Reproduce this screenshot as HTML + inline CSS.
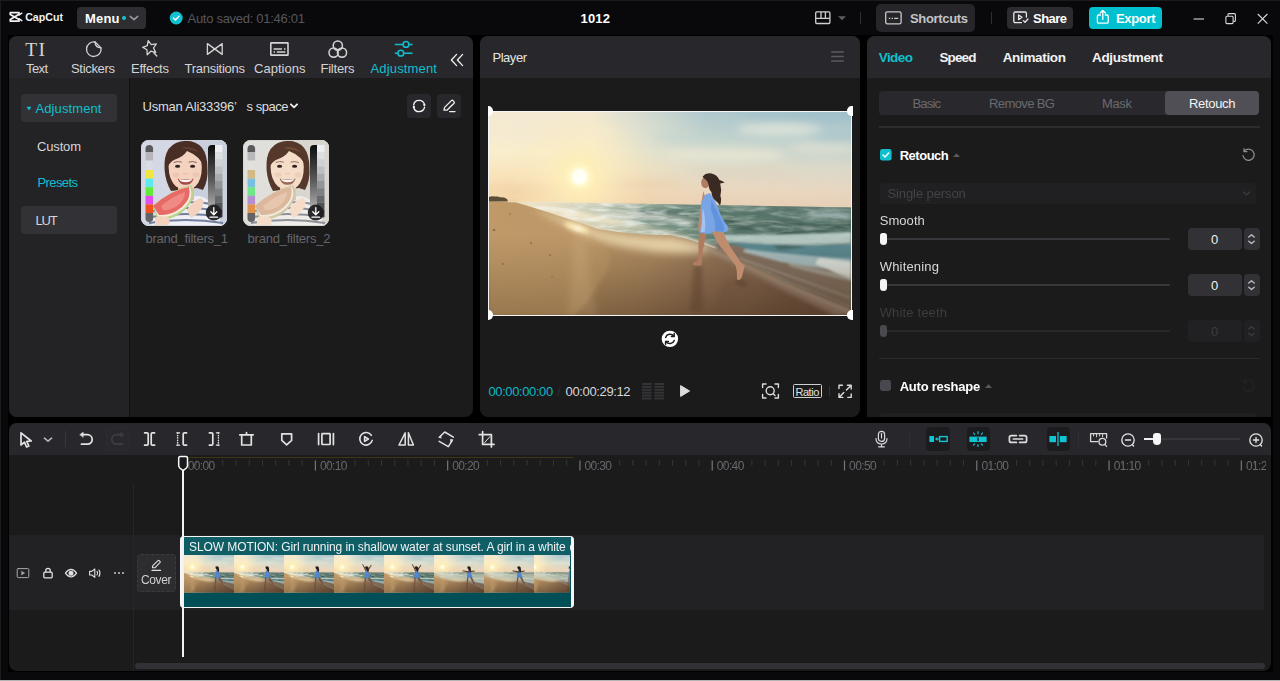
<!DOCTYPE html>
<html lang="en"><head><meta charset="utf-8"><title>CapCut</title>
<style>
*{box-sizing:border-box;margin:0;padding:0}
html,body{width:1280px;height:681px;overflow:hidden;background:#09090b}
body{position:relative;font-family:"Liberation Sans",sans-serif;font-size:13px;color:#fff}
.a{position:absolute}
.t{position:absolute;white-space:nowrap;display:block}
svg{position:absolute;overflow:visible}
.panel{position:absolute;background:#1b1b1c;border-radius:8px;overflow:hidden}
.hd{position:absolute;left:0;top:0;right:0;height:42px;background:#28282c}
.ic{fill:none;stroke:#d6d6d6;stroke-width:1.4;stroke-linecap:round;stroke-linejoin:round}

</style></head>
<body>

<svg width="0" height="0" style="left:0;top:0">
<defs>
<linearGradient id="skyL" x1="0" y1="0" x2="0" y2="1">
 <stop offset="0" stop-color="#f3ead4"/><stop offset="0.4" stop-color="#f9eecd"/><stop offset="0.72" stop-color="#f8dfb4"/><stop offset="1" stop-color="#f4d0a2"/>
</linearGradient>
<linearGradient id="skyR" x1="0" y1="0" x2="0" y2="1">
 <stop offset="0" stop-color="#a3c2cc"/><stop offset="0.3" stop-color="#bdd0cd"/><stop offset="0.55" stop-color="#d9d8c9"/><stop offset="0.8" stop-color="#e8d6c0"/><stop offset="1" stop-color="#e6ccb4"/>
</linearGradient>
<linearGradient id="skyMask" x1="0" y1="0" x2="1" y2="0">
 <stop offset="0.28" stop-color="#fff" stop-opacity="0"/><stop offset="0.6" stop-color="#fff" stop-opacity="0.85"/><stop offset="1" stop-color="#fff" stop-opacity="1"/>
</linearGradient>
<mask id="mR"><rect width="362" height="100" fill="url(#skyMask)"/></mask>
<radialGradient id="sunG" cx="90.5" cy="65" r="70" gradientUnits="userSpaceOnUse">
 <stop offset="0" stop-color="#fffef2"/><stop offset="0.1" stop-color="#fff7c6"/><stop offset="0.24" stop-color="#fdeeb8" stop-opacity="0.9"/><stop offset="0.55" stop-color="#fcecc0" stop-opacity="0.45"/><stop offset="1" stop-color="#fbe8b8" stop-opacity="0"/>
</radialGradient>
<linearGradient id="sandG" x1="0" y1="0" x2="1" y2="0.12">
 <stop offset="0" stop-color="#c09a68"/><stop offset="0.3" stop-color="#ba9566"/><stop offset="0.5" stop-color="#ac8a62"/><stop offset="0.72" stop-color="#8e6f55"/><stop offset="1" stop-color="#705543"/>
</linearGradient>
<linearGradient id="sandD" x1="0" y1="0" x2="0" y2="1">
 <stop offset="0" stop-color="#3a2410" stop-opacity="0"/><stop offset="0.3" stop-color="#3a2410" stop-opacity="0"/><stop offset="0.65" stop-color="#3a2410" stop-opacity="0.2"/><stop offset="1" stop-color="#3a2410" stop-opacity="0.42"/>
</linearGradient>
<linearGradient id="seaG" x1="0" y1="0" x2="1" y2="0">
 <stop offset="0.06" stop-color="#efe3c6"/><stop offset="0.22" stop-color="#e2dcc4"/><stop offset="0.32" stop-color="#c9ccb8"/><stop offset="0.44" stop-color="#9cae9c"/><stop offset="0.6" stop-color="#627e70"/><stop offset="1" stop-color="#49655b"/>
</linearGradient>
<filter id="b05" x="-20%" y="-20%" width="140%" height="140%"><feGaussianBlur stdDeviation="0.5"/></filter>
<filter id="b1" x="-20%" y="-20%" width="140%" height="140%"><feGaussianBlur stdDeviation="1"/></filter>
<filter id="b2" x="-20%" y="-20%" width="140%" height="140%"><feGaussianBlur stdDeviation="2"/></filter>
<filter id="b4" x="-30%" y="-30%" width="160%" height="160%"><feGaussianBlur stdDeviation="4.5"/></filter>
<filter id="b8" x="-40%" y="-40%" width="180%" height="180%"><feGaussianBlur stdDeviation="9"/></filter>
<filter id="foam" x="0" y="0" width="100%" height="100%">
 <feTurbulence type="fractalNoise" baseFrequency="0.045 0.22" numOctaves="3" seed="7" result="n"/>
 <feColorMatrix in="n" type="matrix" values="0 0 0 0 0.9  0 0 0 0 0.93  0 0 0 0 0.9  2.6 1.4 0 0 -1.75"/>
</filter>
<filter id="dark" x="0" y="0" width="100%" height="100%">
 <feTurbulence type="fractalNoise" baseFrequency="0.03 0.16" numOctaves="3" seed="21" result="n"/>
 <feColorMatrix in="n" type="matrix" values="0 0 0 0 0.16  0 0 0 0 0.25  0 0 0 0 0.21  0 2.8 1.2 0 -1.6"/>
</filter>
<filter id="grain" x="0" y="0" width="100%" height="100%">
 <feTurbulence type="fractalNoise" baseFrequency="0.6" numOctaves="2" seed="3" result="n"/>
 <feColorMatrix in="n" type="matrix" values="0 0 0 0 0.35  0 0 0 0 0.24  0 0 0 0 0.14  1.2 0 0 0 -0.52"/>
</filter>
<linearGradient id="gFoam" x1="0" y1="0" x2="1" y2="0"><stop offset="0" stop-color="#fff"/><stop offset="0.35" stop-color="#bbb"/><stop offset="0.6" stop-color="#666"/><stop offset="1" stop-color="#4a4a4a"/></linearGradient>
<linearGradient id="gDark" x1="0" y1="0" x2="1" y2="0"><stop offset="0.1" stop-color="#000"/><stop offset="0.4" stop-color="#777"/><stop offset="0.65" stop-color="#fff"/></linearGradient>
<mask id="mFoam"><rect x="30" y="89" width="332" height="110" fill="url(#gFoam)"/></mask>
<mask id="mDark"><rect x="30" y="89" width="332" height="110" fill="url(#gDark)"/></mask>
<clipPath id="sceneClip"><rect width="362" height="203"/></clipPath>
<clipPath id="seaClip"><path d="M0 89 L362 95.6 V196 Q330 182 296.5 170 Q280 161 261 152.3 Q245 144 220 134.5 Q205 128 181 123 Q150 124 109 117 Q60 100 27 90.5 Z"/></clipPath>
<clipPath id="drySand"><path d="M0 89.5 L27 90.5 Q40 97 57.6 106 Q70 112 79 116.8 Q95 122 105.6 127.4 Q120 136 121.6 145.2 Q120 158 112.7 168.3 Q104 180 98.5 189.6 Q90 198 84 204 H0 Z"/></clipPath>

<symbol id="beach" viewBox="0 0 362 203" preserveAspectRatio="none">
<g clip-path="url(#sceneClip)">
 <rect width="362" height="100" fill="url(#skyL)"/>
 <rect width="362" height="100" fill="url(#skyR)" mask="url(#mR)"/>
 <!-- clouds -->
 <g filter="url(#b4)">
  <ellipse cx="290" cy="17" rx="42" ry="6" fill="#e2e6da" opacity="0.85"/>
  <ellipse cx="335" cy="36" rx="36" ry="5" fill="#dfe0d2" opacity="0.85"/>
  <ellipse cx="235" cy="43" rx="62" ry="7" fill="#e9e6d4" opacity="0.85"/>
  <ellipse cx="310" cy="6" rx="55" ry="4" fill="#98bac8" opacity="0.6"/>
  <ellipse cx="345" cy="26" rx="25" ry="3.5" fill="#9dbdc8" opacity="0.6"/>
  <ellipse cx="200" cy="26" rx="38" ry="5" fill="#c2d3ce" opacity="0.6"/>
  <ellipse cx="55" cy="77" rx="60" ry="3" fill="#ecc9a2" opacity="0.75"/>
  <ellipse cx="150" cy="72.5" rx="40" ry="2.3" fill="#e6c8a6" opacity="0.8"/>
  <ellipse cx="255" cy="60" rx="50" ry="3" fill="#ded2be" opacity="0.7"/>
  <ellipse cx="60" cy="20" rx="70" ry="10" fill="#f4ead2" opacity="0.6"/>
 </g>
 <rect width="362" height="110" fill="url(#sunG)"/>
 <ellipse cx="90.5" cy="64.6" rx="11" ry="10" fill="#fff6c8" filter="url(#b2)"/><ellipse cx="90.5" cy="64.8" rx="7.6" ry="8.2" fill="#fffff6" filter="url(#b1)"/>
 <!-- sea -->
 <path d="M0 89 L362 95.6 V203 H0 Z" fill="url(#seaG)"/>
 <g clip-path="url(#seaClip)">
  <g filter="url(#b2)">
   <path d="M150 97 Q230 96 362 99 V110 Q260 103 150 103 Z" fill="#55736a" opacity="0.9"/>
   <path d="M205 107 Q290 107 362 112 V138 Q290 120 212 115 Z" fill="#425e55"/>
   <path d="M232 121 Q300 124 362 134 V150 Q300 140 240 130 Z" fill="#4c6b62"/>
   <path d="M110 100 Q165 102 205 110 L200 114 Q160 107 108 104 Z" fill="#e4e6da" opacity="0.9"/>
   <path d="M145 106 Q185 108 208 116 L204 120 Q180 113 143 111 Z" fill="#68877a"/>
   <path d="M320 99.4 Q345 100.4 362 102.4 V106.4 Q340 104.4 320 103.4 Z" fill="#c2d6d6" opacity="0.85"/>
   <path d="M30 92 Q90 97 180 121 Q120 113 70 104 Z" fill="#f1e6c8"/>
  </g>
  <rect x="30" y="89" width="332" height="110" filter="url(#dark)" opacity="0.7" mask="url(#mDark)"/>
  <rect x="30" y="89" width="332" height="110" filter="url(#foam)" opacity="0.85" mask="url(#mFoam)"/>
  <!-- thin water film over sand -->
  <path d="M214 132 L248 133 Q272 140 296 146 Q330 153 362 159 V197 Q330 183 296.5 170 Q280 161 261 152.3 Q245 144 220 134.5 Z" fill="#857364" filter="url(#b1)"/>
  <g filter="url(#b1)">
   <path d="M228 122.6 Q262 124 300 122.6 Q335 121 362 120 V131 Q330 133 300 133 Q262 132 232 128.6 Z" fill="#c2d3cf" opacity="0.85"/>
   <path d="M240 130 Q300 134.6 362 132.6 V148 Q300 144 262 138.6 Z" fill="#5a8b96" opacity="0.9"/>
   <path d="M256 137 Q300 143 362 147 V160 Q320 155 292 150 Q274 145 254 140 Z" fill="#aec8cc" opacity="0.9"/><path d="M330 146 Q348 148 362 150 V168 Q346 160 326 152 Z" fill="#e4eae4" opacity="0.95"/>
   <path d="M300 151 Q335 158 362 164 V169 Q330 163 300 154 Z" fill="#b9bdb4" opacity="0.6"/>
   <path d="M284 134 Q300 131 318 135 Q300 137 290 138 Z" fill="#3f5f58" opacity="0.7"/>
   <path d="M175 120.6 Q205 126 228 135.4 L224 138 Q200 130 172 124 Z" fill="#e2e8e0" opacity="0.85"/>
   <path d="M250 146 Q290 160 362 186" fill="none" stroke="#c9bdb0" stroke-width="1.2" opacity="0.7"/>
  </g>
 </g>
 <!-- sand -->
 <path d="M27 90.5 Q60 100 109 117 Q150 124 181 123 Q205 128 220 134.5 Q245 144 261 152.3 Q280 161 296.5 170 Q330 182 362 196 V203 H0 V89.5 Z" fill="url(#sandG)"/>
 <path d="M0 89.5 H362 V203 H0 Z" fill="url(#sandD)"/>
 <g filter="url(#b4)">
  <!-- bright wet sand near shoreline -->
  <path d="M40 95 Q75 106 112 119 Q150 126 182 125 Q205 129 226 138 Q200 143 168 140 Q128 135 100 125 Q66 110 40 95 Z" fill="#e8d4aa" opacity="0.95"/>
 </g>
 <g filter="url(#b2)">
  <path d="M222 136 Q262 154 300 172 Q330 184 362 198 V203 H346 Q300 182 262 162 Q240 150 216 140 Z" fill="#8d7868" opacity="0.6"/>
  <path d="M206 131.6 Q244 146.6 288 167.6 Q322 183 362 198.4" fill="none" stroke="#c9bba8" stroke-width="1.2" opacity="0.8"/>
  <ellipse cx="87.5" cy="116" rx="13" ry="4" fill="#fbe9b4" transform="rotate(20 87.5 116)"/>
  <ellipse cx="88.5" cy="117" rx="4.6" ry="2" fill="#fffbe2"/>
 </g>
 <!-- dry sand -->
 <g clip-path="url(#drySand)">
  <rect x="0" y="88" width="125" height="116" filter="url(#grain)" opacity="0.45"/>
 </g>
 <path d="M0 89.5 L27 90.5 Q40 97 57.6 106 Q70 112 79 116.8 Q95 122 105.6 127.4 Q120 136 121.6 145.2 Q120 158 112.7 168.3 Q104 180 98.5 189.6 Q90 198 84 204 H0 Z" fill="#c49d6a" opacity="0.3" filter="url(#b2)"/>
 <path d="M78 204 Q84 160 84 124 L97 126 Q100 160 108 204 Z" fill="#e2c190" opacity="0.2" filter="url(#b4)"/>
 <!-- trees -->
 <path d="M0 85 Q3 83.5 6 84.6 Q9 84 12 85.4 Q15 84.8 18 87 L19 89.6 L0 89.6 Z" fill="#5a4e34"/>
 <g fill="#7a5c3e" opacity="0.7"><circle cx="5" cy="118" r="1.3"/><circle cx="42" cy="131" r="1"/><circle cx="61" cy="143" r="0.9"/><circle cx="21" cy="102" r="0.8"/><circle cx="14" cy="152" r="0.9"/><circle cx="63" cy="165" r="0.8"/></g>
</g>
</symbol>

<symbol id="girl" viewBox="0 0 362 203" preserveAspectRatio="none">
 <g>
  <g filter="url(#b2)" opacity="0.5">
   <path d="M205 154 L213 154 L213.6 200 L201 200 Z" fill="#5f432e"/>
   <path d="M249 167 L260 171 L254 175 L245 171 Z" fill="#4e362a"/>
   <path d="M236 168 L248 170 L240 202 L226 202 Z" fill="#6a4c38" opacity="0.5"/>
  </g>
  <g filter="url(#b05)">
  <!-- standing leg -->
  <path d="M210.4 119 Q209 130 209.6 138 L208.4 148.6 L204 150.4 Q203 152.8 205.6 153.4 L212.6 153.8 L213.6 140 Q215.6 130 217.6 120 Z" fill="#b07c60"/>
  <!-- back leg -->
  <path d="M222.6 117.6 Q226 128 231.4 134.6 L246.6 153.4 Q248.6 160 248 167.6 Q251.4 169.4 253.2 164 L255.8 153.6 L252.4 151.2 L240.6 133.4 Q235 124 233.6 116 Z" fill="#c08c6e"/>
  <!-- arm -->
  <path d="M214.4 79 Q211.6 92 210.2 106 Q208.6 114 209.4 119.6 L212 119.8 Q213 106 217.8 91 Z" fill="#bd8a6e"/>
  <!-- dress -->
  <path d="M216.6 82.4 L221 81 Q226 88 228.4 94 Q231.6 104 236 110.6 Q240.6 115.6 239 119 Q234 121.8 226 118.8 Q221 123.6 211 120.6 Q212.6 112 213 105 Q211 98 212 92 Q214 86 216.6 82.4 Z" fill="#77a5e6"/>
  <path d="M222 88 Q228 98 232 108 Q236 114 234.6 119.6 Q229 120 226 118.8 Q227 108 222 98 Z" fill="#5b8fd8" opacity="0.8"/>
  <path d="M214 96 Q217 106 216 119.6 L211.6 120.4 Q213.4 110 213 104 Z" fill="#a9c9f4" opacity="0.85"/>
  <!-- head & hair -->
  <ellipse cx="216.4" cy="70.6" rx="4.2" ry="5.6" fill="#b07c62"/>
  <path d="M213.6 64.4 Q217 60.4 222.6 61.6 Q228.4 63 230.4 68 Q233.6 68.4 235.6 71 Q232.4 70.6 231.2 71.6 Q233 78 231.4 84 Q233 88 231 93.4 Q228.6 90 226.4 88.6 Q223 86 222.4 80 Q220 78 219.6 73 Q218.6 68 215 66.4 Z" fill="#3b2a22"/>
  </g>
 </g>
</symbol>
</defs>
</svg>
<div class="a" style="left:0;top:0;width:1280px;height:1px;background:#1b1b1e"></div>
<div class="a" style="left:0;top:0;width:1px;height:681px;background:#1b1b1e"></div>
<div class="a" style="left:0;top:679.5px;width:1280px;height:1.5px;background:#b4b4b4"></div>
<div class="a" style="left:7.5px;top:35.2px;width:1265px;height:637.2px;background:#000"></div>
<div class="panel" style="left:9px;top:36px;width:464px;height:381px"><div class="hd"></div><div class="a" style="left:0;top:42px;width:120px;height:339px;background:#232326"></div><div class="a" style="left:120px;top:42px;width:1px;height:339px;background:#101011"></div></div>
<div class="panel" style="left:480px;top:36px;width:380px;height:381px"><div class="hd"></div></div>
<div class="panel" style="left:867px;top:36px;width:404px;height:381px;border-radius:8px 8px 0 0"><div class="hd"></div></div>
<div class="panel" style="left:9px;top:423px;width:1262px;height:248px"><div class="hd" style="height:32px"></div></div>
<svg style="left:9px;top:10.2px" width="56" height="14" viewBox="0 0 56 14"><g fill="none" stroke="#f2f2f2" stroke-width="1.8" stroke-linejoin="round" stroke-linecap="round"><path d="M1.3 4.4 V2.7 H10 V4.2 L1.3 9.6 V11.1 H10 V9.6 L1.3 4.4"/><path d="M10.2 5 L12.8 3.2 M10.2 8.8 L12.8 10.6" stroke-width="1.5"/></g></svg>
<span class="t" id="t0" style="left:25.2px;top:6.73px;font-size:10.6px;line-height:20px;color:#f2f2f2;font-weight:700;letter-spacing:0.026px;">CapCut</span>
<div class="a" style="left:77px;top:7px;width:69px;height:22px;border-radius:4px;background:#2d2d32"></div>
<span class="t" id="t1" style="left:85px;top:8.86px;font-size:13px;line-height:20px;color:#fff;font-weight:700;letter-spacing:0.182px;">Menu</span>
<div class="a" style="left:122px;top:16px;width:4px;height:4px;border-radius:50%;background:#10c4d2"></div>
<svg style="left:129px;top:14px" width="10" height="8" viewBox="0 0 10 8"><path d="M1.3 2.4 L5 5.6 L8.7 2.4" fill="none" stroke="#9c9ca0" stroke-width="1.5" stroke-linecap="round" stroke-linejoin="round"/></svg>
<svg style="left:169px;top:11px" width="14" height="14" viewBox="0 0 14 14"><circle cx="7.2" cy="7" r="6.5" fill="#12c0cf"/><path d="M4.4 7.1 L6.4 9 L10 5.3" fill="none" stroke="#fff" stroke-width="1.4" stroke-linecap="round" stroke-linejoin="round"/></svg>
<span class="t" id="t2" style="left:187.5px;top:9.16px;font-size:13px;line-height:20px;color:#57575b;letter-spacing:-0.283px;">Auto saved: 01:46:01</span>
<span class="t" id="t3" style="left:580.5px;top:8.86px;font-size:13px;line-height:20px;color:#fff;font-weight:700;letter-spacing:0.193px;">1012</span>
<svg style="left:815px;top:11px" width="32" height="14" viewBox="0 0 32 14"><g fill="none" stroke="#cfcfcf" stroke-width="1.3"><rect x="0.7" y="0.9" width="14.2" height="11.6" rx="1"/><path d="M0.7 7.4 H14.9 M6 0.9 V7.4 M10.4 0.9 V7.4"/></g><path d="M23 5.2 H31 L27 9.3 Z" fill="#5c5c60"/></svg>
<div class="a" style="left:860px;top:12px;width:1px;height:12px;background:#2f2f33"></div>
<div class="a" style="left:876px;top:4px;width:99px;height:28px;border-radius:5px;background:#26262a"></div>
<svg style="left:885px;top:11px" width="17" height="14" viewBox="0 0 17 14"><g fill="none" stroke="#c8c8c8" stroke-width="1.3"><rect x="0.7" y="0.8" width="15.4" height="12" rx="1.6"/><path d="M3.8 7.4 H5.2 M6.6 7.4 H8 M9.2 7.4 H13.2"/></g></svg>
<span class="t" id="t4" style="left:910px;top:8.86px;font-size:13px;line-height:20px;color:#c4c4c6;font-weight:700;letter-spacing:-0.334px;">Shortcuts</span>
<div class="a" style="left:991px;top:12px;width:1px;height:12px;background:#2f2f33"></div>
<div class="a" style="left:1007px;top:7px;width:66px;height:22px;border-radius:4px;background:#2b2b30"></div>
<svg style="left:1013px;top:11px" width="16" height="13" viewBox="0 0 16 13"><g fill="none" stroke="#e8e8e8" stroke-width="1.3" stroke-linecap="round" stroke-linejoin="round"><path d="M8.5 11.6 H2.2 Q0.8 11.6 0.8 10.2 V2.4 Q0.8 1 2.2 1 H12 Q13.4 1 13.4 2.4 V6"/><path d="M5.6 4 L9 6.3 L5.6 8.6 Z"/><path d="M10.4 9.6 L12 11.3 L15 8"/></g></svg>
<span class="t" id="t5" style="left:1033px;top:8.86px;font-size:13px;line-height:20px;color:#fff;font-weight:700;letter-spacing:-0.535px;">Share</span>
<div class="a" style="left:1089px;top:7px;width:73px;height:22px;border-radius:4px;background:#00bfcf"></div>
<svg style="left:1096px;top:9px" width="14" height="16" viewBox="0 0 14 16"><g fill="none" stroke="#fff" stroke-width="1.3" stroke-linecap="round" stroke-linejoin="round"><path d="M4.4 6 H2.6 Q1.4 6 1.4 7.2 V13 Q1.4 14.2 2.6 14.2 H11 Q12.2 14.2 12.2 13 V7.2 Q12.2 6 11 6 H9.2"/><path d="M6.8 10.4 V1.6 M4.2 4 L6.8 1.4 L9.4 4"/></g></svg>
<span class="t" id="t6" style="left:1116px;top:8.86px;font-size:13px;line-height:20px;color:#fff;font-weight:700;letter-spacing:-0.334px;">Export</span>
<svg style="left:1190px;top:10px" width="82" height="18" viewBox="0 0 82 18"><g fill="none" stroke="#d8d8d8" stroke-width="1.1"><path d="M3.6 9 H14"/><rect x="35.9" y="6.2" width="7.2" height="7.4" rx="1"/><path d="M38 6 V4.6 Q38 3.6 39 3.6 H44.4 Q45.4 3.6 45.4 4.6 V10.4 Q45.4 11.4 44.4 11.4 H43.4"/><path d="M67.8 4 L77.4 13.6 M77.4 4 L67.8 13.6"/></g></svg><span class="t" id="t7" style="left:26px;top:59.26px;font-size:13px;line-height:20px;color:#d4d4d6;letter-spacing:-0.615px;">Text</span>
<span class="t" id="t8" style="left:71px;top:59.26px;font-size:13px;line-height:20px;color:#d4d4d6;letter-spacing:-0.319px;">Stickers</span>
<span class="t" id="t9" style="left:131px;top:59.26px;font-size:13px;line-height:20px;color:#d4d4d6;letter-spacing:-0.253px;">Effects</span>
<span class="t" id="t10" style="left:184.5px;top:59.26px;font-size:13px;line-height:20px;color:#d4d4d6;letter-spacing:-0.261px;">Transitions</span>
<span class="t" id="t11" style="left:254px;top:59.26px;font-size:13px;line-height:20px;color:#d4d4d6;letter-spacing:0.027px;">Captions</span>
<span class="t" id="t12" style="left:320.5px;top:59.26px;font-size:13px;line-height:20px;color:#d4d4d6;letter-spacing:-0.232px;">Filters</span>
<span class="t" id="t13" style="left:370.5px;top:59.26px;font-size:13px;line-height:20px;color:#10bfcd;letter-spacing:0.161px;">Adjustment</span>
<span class="t" id="t14" style="left:25.2px;top:40.03px;font-size:19.5px;line-height:20px;color:#d4d4d6;letter-spacing:1.5px;font-family:'Liberation Serif',serif;">TI</span>
<svg style="left:0;top:0" width="480" height="80" viewBox="0 0 480 80"><g fill="none" stroke="#d4d4d6" stroke-width="1.3" stroke-linecap="round" stroke-linejoin="round"><path d="M95.1 42 A7.3 7.3 0 1 0 101 47.9 Z"/><path d="M95.1 42 Q95.2 47.6 101 47.9"/><path d="M148.2 40.6 L151.3 44.6 L156.3 43.9 L153.5 48 L155.7 52.6 L150.8 51.2 L147.2 54.7 L147 49.7 L142.6 47.3 L147.3 45.6 Z"/><path d="M154 53 L156.8 56"/><path d="M207.4 43.6 V54.4 L222.2 43.6 V54.4 Z"/><rect x="270.8" y="42.9" width="17.2" height="12.2" rx="0.4" stroke-width="1.6"/><path d="M273.6 48.9 H282 M284 48.9 H285.4 M273.6 52 H275 M276.8 52 H285.4" stroke-width="1.5" stroke-linecap="butt"/><circle cx="337.8" cy="45.6" r="4.6" stroke-width="1.5"/><circle cx="333.6" cy="52.6" r="4.6" stroke-width="1.5"/><circle cx="342" cy="52.6" r="4.6" stroke-width="1.5"/></g><g fill="none" stroke="#10bfcd" stroke-width="1.5" stroke-linecap="round"><path d="M395.4 44.4 H403 M409 44.4 H412 M395.4 53.2 H397.8 M403.8 53.2 H412"/><circle cx="406" cy="44.4" r="2.9"/><circle cx="400.8" cy="53.2" r="2.9"/></g></svg>
<svg style="left:450px;top:53px" width="14" height="14" viewBox="0 0 14 14"><path d="M6.6 1.4 L1.4 7 L6.6 12.6 M12.6 1.4 L7.4 7 L12.6 12.6" fill="none" stroke="#f0f0f0" stroke-width="1.3" stroke-linecap="round" stroke-linejoin="round"/></svg>
<div class="a" style="left:21px;top:94px;width:96px;height:28px;border-radius:4px;background:#323236"></div>
<svg style="left:26px;top:105.8px" width="6" height="5" viewBox="0 0 6 5"><path d="M0.6 0.8 H5.4 L3 4.4 Z" fill="#10bfcd"/></svg>
<span class="t" id="t15" style="left:35.5px;top:99.06px;font-size:13px;line-height:20px;color:#10bfcd;letter-spacing:0.106px;">Adjustment</span>
<span class="t" id="t16" style="left:37px;top:137.26px;font-size:13px;line-height:20px;color:#d6d6d8;letter-spacing:-0.159px;">Custom</span>
<span class="t" id="t17" style="left:37.5px;top:173.26px;font-size:13px;line-height:20px;color:#10bfcd;letter-spacing:-0.596px;">Presets</span>
<div class="a" style="left:21px;top:206px;width:96px;height:28px;border-radius:4px;background:#323236"></div>
<span class="t" id="t18" style="left:35.5px;top:211.06px;font-size:13px;line-height:20px;color:#d6d6d8;letter-spacing:-1.2px;">LUT</span>
<span class="t" id="t19" style="left:142.5px;top:97.06px;font-size:13px;line-height:20px;color:#dededf;letter-spacing:-0.219px;">Usman Ali33396’</span>
<span class="t" id="t20" style="left:246.5px;top:97.06px;font-size:13px;line-height:20px;color:#dededf;letter-spacing:-0.469px;">s space</span>
<svg style="left:289px;top:102px" width="10" height="8" viewBox="0 0 10 8"><path d="M1.9 2.3 L5 5.3 L8.1 2.3" fill="none" stroke="#f0f0f0" stroke-width="1.8" stroke-linecap="round" stroke-linejoin="round"/></svg>
<div class="a" style="left:407px;top:94px;width:24px;height:24px;border-radius:4px;background:#28282c"></div>
<div class="a" style="left:437px;top:94px;width:24px;height:24px;border-radius:4px;background:#28282c"></div>
<svg style="left:412px;top:99px" width="15" height="14" viewBox="0 0 15 14"><g fill="none" stroke="#f4f4f4" stroke-width="1.4" stroke-linecap="round" stroke-linejoin="round"><path d="M1.62 5.84 A5.6 5.6 0 0 1 12.51 5.55 M12.58 8.16 A5.6 5.6 0 0 1 1.69 8.45"/></g><circle cx="12.31" cy="6.05" r="1.15" fill="#f4f4f4"/><circle cx="1.89" cy="7.95" r="1.15" fill="#f4f4f4"/></svg>
<svg style="left:442px;top:99px" width="15" height="14" viewBox="0 0 15 14"><g fill="none" stroke="#f0f0f0" stroke-width="1.3" stroke-linecap="round" stroke-linejoin="round"><path d="M2 11.2 L2.6 8.4 L9.4 1.6 Q10.2 0.9 11 1.6 L12 2.6 Q12.7 3.4 12 4.2 L5.2 11 Z"/><path d="M7.6 12.6 H13"/></g></svg>
<span class="t" id="t21" style="left:145.5px;top:228.66px;font-size:13px;line-height:20px;color:#66666b;letter-spacing:-0.25px;">brand_filters_1</span>
<span class="t" id="t22" style="left:247.5px;top:228.66px;font-size:13px;line-height:20px;color:#66666b;letter-spacing:-0.214px;">brand_filters_2</span><span class="t" id="t23" style="left:492.5px;top:48.06px;font-size:13px;line-height:20px;color:#e4e4e6;letter-spacing:-0.472px;">Player</span>
<svg style="left:830px;top:50px" width="15" height="13" viewBox="0 0 15 13"><path d="M1.2 2 H13.8 M1.2 6.5 H13.8 M1.2 11 H13.8" fill="none" stroke="#5a5a60" stroke-width="1.3"/></svg>
<div class="a" style="left:488px;top:100px;width:364.6px;height:225px;overflow:hidden"><svg style="left:1px;top:12px" width="362" height="203"><use href="#beach" width="362" height="203"/><use href="#girl" width="362" height="203"/></svg><div class="a" style="left:-0.2px;top:10.6px;width:364.6px;height:205.3px;border:1.5px solid #f6f6f6"></div><div class="a" style="left:-4.6px;top:6px;width:9.2px;height:9.6px;border-radius:50%;background:#fff"></div><div class="a" style="left:359.4px;top:6px;width:9.2px;height:9.6px;border-radius:50%;background:#fff"></div><div class="a" style="left:-4.6px;top:210.4px;width:9.2px;height:9.6px;border-radius:50%;background:#fff"></div><div class="a" style="left:359.4px;top:210.4px;width:9.2px;height:9.6px;border-radius:50%;background:#fff"></div></div>
<svg style="left:661px;top:330px" width="18" height="18" viewBox="0 0 18 18"><circle cx="8.9" cy="8.9" r="8.2" fill="#fff"/><g fill="none" stroke="#1c1c1e" stroke-width="1.5" stroke-linecap="round" stroke-linejoin="round"><path d="M4.6 7.4 A4.7 4.7 0 0 1 12.8 6.2 M13.2 10.4 A4.7 4.7 0 0 1 5 11.6"/><path d="M13.2 3.6 V6.4 H10.4 M4.6 14.2 V11.4 H7.4"/></g></svg>
<span class="t" id="t24" style="left:488.5px;top:382.06px;font-size:13px;line-height:20px;color:#10b6c6;letter-spacing:-0.399px;">00:00:00:00</span>
<span class="t" id="t25" style="left:557px;top:382.06px;font-size:13px;line-height:20px;color:#303033;letter-spacing:0.375px;">/</span>
<span class="t" id="t26" style="left:565.6px;top:382.06px;font-size:13px;line-height:20px;color:#d8d8da;letter-spacing:-0.369px;">00:00:29:12</span>
<svg style="left:641.5px;top:383.4px" width="22" height="17" viewBox="0 0 22 17"><g fill="#343437"><rect x="0" y="0" width="9.6" height="2"/><rect x="12.4" y="0" width="9.6" height="2"/><rect x="0" y="2.9" width="9.6" height="2"/><rect x="12.4" y="2.9" width="9.6" height="2"/><rect x="0" y="5.8" width="9.6" height="2"/><rect x="12.4" y="5.8" width="9.6" height="2"/><rect x="0" y="8.7" width="9.6" height="2"/><rect x="12.4" y="8.7" width="9.6" height="2"/><rect x="0" y="11.6" width="9.6" height="2"/><rect x="12.4" y="11.6" width="9.6" height="2"/><rect x="0" y="14.5" width="9.6" height="2"/><rect x="12.4" y="14.5" width="9.6" height="2"/></g></svg>
<svg style="left:679px;top:384px" width="12" height="14" viewBox="0 0 12 14"><path d="M1.6 1.6 V12.4 L10.6 7 Z" fill="#dcdcde" stroke="#dcdcde" stroke-width="1" stroke-linejoin="round"/></svg>
<svg style="left:761px;top:382px" width="19" height="18" viewBox="0 0 19 18"><g fill="none" stroke="#dcdcde" stroke-width="1.4" stroke-linecap="round" stroke-linejoin="round"><path d="M1.6 5.6 V2 H5 M14 2 H17.4 V5.6 M17.4 12.4 V16 H14 M5 16 H1.6 V12.4"/><circle cx="9.2" cy="8.8" r="4"/><path d="M12.2 11.8 L14 13.6"/></g></svg>
<div class="a" style="left:792.5px;top:383.6px;width:29.6px;height:14.6px;border:1.2px solid #d0d0d2;border-radius:1.5px"></div>
<span class="t" id="t27" style="left:795.4px;top:381.83px;font-size:11px;line-height:20px;color:#e0e0e2;letter-spacing:-0.422px;">Ratio</span>
<div class="a" style="left:829px;top:386px;width:1px;height:10px;background:#323236"></div>
<svg style="left:837px;top:383px" width="16" height="16" viewBox="0 0 16 16"><g fill="none" stroke="#dcdcde" stroke-width="1.4" stroke-linecap="round" stroke-linejoin="round"><path d="M10.4 2.2 H14.2 V6 M14 2.4 L9.4 7 M5.8 14.4 H2 V10.6 M2.2 14.2 L6.8 9.6 M2 5.6 V2.2 H5.4 M14.2 11 V14.4 H10.8"/></g></svg><span class="t" id="t28" style="left:878.7px;top:48.06px;font-size:13.5px;line-height:20px;color:#10bfcd;font-weight:700;letter-spacing:-0.554px;">Video</span>
<span class="t" id="t29" style="left:939.4px;top:48.06px;font-size:13.5px;line-height:20px;color:#f2f2f2;font-weight:700;letter-spacing:-0.854px;">Speed</span>
<span class="t" id="t30" style="left:1002.7px;top:48.06px;font-size:13.5px;line-height:20px;color:#f2f2f2;font-weight:700;letter-spacing:-0.338px;">Animation</span>
<span class="t" id="t31" style="left:1092px;top:48.06px;font-size:13.5px;line-height:20px;color:#f2f2f2;font-weight:700;letter-spacing:-0.361px;">Adjustment</span>
<div class="a" style="left:879px;top:91px;width:380.4px;height:24px;border-radius:4px;background:#29292d"></div>
<div class="a" style="left:1164.5px;top:91px;width:94.9px;height:24px;border-radius:4px;background:#4f4f55"></div>
<span class="t" id="t32" style="left:912.5px;top:94.06px;font-size:13px;line-height:20px;color:#6a6a70;letter-spacing:-0.824px;">Basic</span>
<span class="t" id="t33" style="left:989px;top:94.06px;font-size:13px;line-height:20px;color:#6a6a70;letter-spacing:-0.602px;">Remove BG</span>
<span class="t" id="t34" style="left:1102px;top:94.06px;font-size:13px;line-height:20px;color:#6a6a70;letter-spacing:-0.354px;">Mask</span>
<span class="t" id="t35" style="left:1189px;top:94.06px;font-size:13px;line-height:20px;color:#f4f4f4;letter-spacing:-0.32px;">Retouch</span>
<div class="a" style="left:879px;top:126px;width:381px;height:2px;background:#2d2d30"></div>
<svg style="left:879.6px;top:148.9px" width="12" height="12" viewBox="0 0 12 12"><rect x="0" y="0" width="11.6" height="11.6" rx="2.4" fill="#10bfcd"/><path d="M3 5.9 L5 7.9 L8.7 4" fill="none" stroke="#fff" stroke-width="1.4" stroke-linecap="round" stroke-linejoin="round"/></svg>
<span class="t" id="t36" style="left:899.7px;top:146.16px;font-size:13px;line-height:20px;color:#fff;font-weight:700;letter-spacing:-0.483px;">Retouch</span>
<svg style="left:952px;top:152px" width="9" height="6" viewBox="0 0 9 6"><path d="M1 5 H8 L4.5 1.2 Z" fill="#5a5a5f"/></svg>
<svg style="left:1241px;top:147px" width="15" height="15" viewBox="0 0 15 15"><g fill="none" stroke="#8c8c90" stroke-width="1.2" stroke-linecap="round" stroke-linejoin="round"><path d="M3.2 4.2 A5.6 5.6 0 1 1 2 8.6"/><path d="M3 1.6 V4.6 H6"/></g></svg>
<div class="a" style="left:879.5px;top:182.5px;width:376.5px;height:21.5px;border-radius:3px;background:#202022"></div>
<span class="t" id="t37" style="left:887.5px;top:184.06px;font-size:13px;line-height:20px;color:#434347;letter-spacing:-0.1px;">Single person</span>
<svg style="left:1242px;top:190px" width="9" height="7" viewBox="0 0 9 7"><path d="M1.4 2 L4.5 4.8 L7.6 2" fill="none" stroke="#3c3c40" stroke-width="1.3" stroke-linecap="round" stroke-linejoin="round"/></svg>
<span class="t" id="t38" style="left:879.7px;top:211.46px;font-size:13px;line-height:20px;color:#d8d8da;letter-spacing:0.057px;">Smooth</span>
<div class="a" style="left:880px;top:238px;width:289.5px;height:2px;border-radius:1px;background:#38383c"></div>
<div class="a" style="left:879.7px;top:233px;width:7.4px;height:12px;border-radius:3px 3px 4px 4px;background:#f4f4f4"></div>
<div class="a" style="left:1187.8px;top:228px;width:54px;height:22px;border-radius:4px;background:#323236"></div>
<div class="a" style="left:1243.6px;top:228px;width:16px;height:22px;border-radius:4px;background:#323236"></div>
<span class="t" id="t39" style="left:1211px;top:230.06px;font-size:13px;line-height:20px;color:#f0f0f0;letter-spacing:-0.234px;">0</span>
<svg style="left:1247px;top:231px" width="9" height="16" viewBox="0 0 9 16"><path d="M1.8 6 L4.5 3.7 L7.2 6 M1.8 10.2 L4.5 12.5 L7.2 10.2" fill="none" stroke="#b8b8bc" stroke-width="1.5" stroke-linecap="round" stroke-linejoin="round"/></svg>
<span class="t" id="t40" style="left:879.7px;top:257.46px;font-size:13px;line-height:20px;color:#d8d8da;letter-spacing:0.186px;">Whitening</span>
<div class="a" style="left:880px;top:284px;width:289.5px;height:2px;border-radius:1px;background:#38383c"></div>
<div class="a" style="left:879.7px;top:279px;width:7.4px;height:12px;border-radius:3px 3px 4px 4px;background:#f4f4f4"></div>
<div class="a" style="left:1187.8px;top:274px;width:54px;height:22px;border-radius:4px;background:#323236"></div>
<div class="a" style="left:1243.6px;top:274px;width:16px;height:22px;border-radius:4px;background:#323236"></div>
<span class="t" id="t41" style="left:1211px;top:276.06px;font-size:13px;line-height:20px;color:#f0f0f0;letter-spacing:-0.234px;">0</span>
<svg style="left:1247px;top:277px" width="9" height="16" viewBox="0 0 9 16"><path d="M1.8 6 L4.5 3.7 L7.2 6 M1.8 10.2 L4.5 12.5 L7.2 10.2" fill="none" stroke="#b8b8bc" stroke-width="1.5" stroke-linecap="round" stroke-linejoin="round"/></svg>
<span class="t" id="t42" style="left:879.7px;top:303.46px;font-size:13px;line-height:20px;color:#3d3d41;letter-spacing:0.153px;">White teeth</span>
<div class="a" style="left:880px;top:330px;width:289.5px;height:2px;border-radius:1px;background:#29292c"></div>
<div class="a" style="left:879.7px;top:325px;width:7.4px;height:12px;border-radius:3px 3px 4px 4px;background:#4a4a4e"></div>
<div class="a" style="left:1187.8px;top:320px;width:54px;height:22px;border-radius:4px;background:#212124"></div>
<div class="a" style="left:1243.6px;top:320px;width:16px;height:22px;border-radius:4px;background:#212124"></div>
<span class="t" id="t43" style="left:1211px;top:322.06px;font-size:13px;line-height:20px;color:#3c3c40;letter-spacing:-0.234px;">0</span>
<svg style="left:1247px;top:323px" width="9" height="16" viewBox="0 0 9 16"><path d="M1.8 6 L4.5 3.7 L7.2 6 M1.8 10.2 L4.5 12.5 L7.2 10.2" fill="none" stroke="#3a3a3e" stroke-width="1.5" stroke-linecap="round" stroke-linejoin="round"/></svg>
<div class="a" style="left:879px;top:357.6px;width:381px;height:1.2px;background:#2a2a2d"></div>
<div class="a" style="left:879.7px;top:379.9px;width:11.6px;height:11.6px;border-radius:2.4px;background:#48484e"></div>
<span class="t" id="t44" style="left:899.7px;top:377.06px;font-size:13px;line-height:20px;color:#fff;font-weight:700;letter-spacing:-0.225px;">Auto reshape</span>
<svg style="left:984px;top:383px" width="9" height="6" viewBox="0 0 9 6"><path d="M1 5 H8 L4.5 1.2 Z" fill="#5a5a5f"/></svg>
<svg style="left:1241px;top:378px" width="15" height="15" viewBox="0 0 15 15"><g fill="none" stroke="#242427" stroke-width="1.2" stroke-linecap="round" stroke-linejoin="round"><path d="M3.2 4.2 A5.6 5.6 0 1 1 2 8.6"/><path d="M3 1.6 V4.6 H6"/></g></svg>
<div class="a" style="left:879.5px;top:413px;width:376.5px;height:4px;border-radius:3px 3px 0 0;background:#202022"></div><svg style="left:18.6px;top:430.6px" width="16" height="18" viewBox="0 0 16 18"><g fill="none" stroke="#e2e2e4" stroke-width="1.7" stroke-linecap="round" stroke-linejoin="round"><path d="M2 1.8 L2 14 L5.4 11.2 L7.6 16 L9.9 15 L7.7 10.4 L12.2 10 Z"/></g></svg>
<svg style="left:43px;top:436px" width="10" height="8" viewBox="0 0 10 8"><g fill="none" stroke="#b4b4b8" stroke-width="1.7" stroke-linecap="round" stroke-linejoin="round"><path d="M1.4 2.2 L5 5.2 L8.6 2.2"/></g></svg>
<div class="a" style="left:65px;top:431px;width:1px;height:16px;background:#38383c"></div>
<svg style="left:78px;top:431px" width="16" height="16" viewBox="0 0 16 16"><g fill="none" stroke="#e2e2e4" stroke-width="1.7" stroke-linecap="round" stroke-linejoin="round"><path d="M4.6 3.6 H9.4 A4.8 4.8 0 0 1 9.4 13.2 H3.4"/><path d="M2 3.6 L5.2 1.2 V6 Z" fill="#e2e2e4" stroke-width="0.6"/></g></svg>
<div class="a" style="left:106px;top:427px;width:24px;height:24px;border-radius:4px;background:#29292d;border:1px solid #2c2c30"></div>
<svg style="left:110px;top:431px" width="16" height="16" viewBox="0 0 16 16"><g fill="none" stroke="#3e3e42" stroke-width="1.7" stroke-linecap="round" stroke-linejoin="round"><path d="M11.4 3.6 H6.6 A4.8 4.8 0 0 0 6.6 13.2 H12.6"/><path d="M14 3.6 L10.8 1.2 V6 Z" fill="#3e3e42" stroke-width="0.6"/></g></svg>
<svg style="left:142px;top:431px" width="16" height="16" viewBox="0 0 16 16"><g fill="none" stroke="#e2e2e4" stroke-width="1.7" stroke-linecap="round" stroke-linejoin="round"><path d="M2.6 1.8 H5 Q6.2 1.8 6.2 3 V13 Q6.2 14.2 5 14.2 H2.6"/><path d="M12.6 1.8 H10.4 Q9.2 1.8 9.2 3 V13 Q9.2 14.2 10.4 14.2 H12.6"/></g></svg>
<svg style="left:174px;top:431px" width="16" height="16" viewBox="0 0 16 16"><g fill="none" stroke="#e2e2e4" stroke-width="1.3" stroke-linecap="round" stroke-linejoin="round"><path d="M3.6 2 V14" stroke-dasharray="0.3 2.1" stroke-width="1.5"/><path d="M2.8 1.8 H5.6 M2.8 14.2 H5.6" stroke-width="1.2"/><path d="M12.6 1.8 H10.4 Q9.2 1.8 9.2 3 V13 Q9.2 14.2 10.4 14.2 H12.6" stroke-width="1.7"/></g></svg>
<svg style="left:206px;top:431px" width="16" height="16" viewBox="0 0 16 16"><g fill="none" stroke="#e2e2e4" stroke-width="1.3" stroke-linecap="round" stroke-linejoin="round"><path d="M3.4 1.8 H5.6 Q6.8 1.8 6.8 3 V13 Q6.8 14.2 5.6 14.2 H3.4" stroke-width="1.7"/><path d="M12.4 2 V14" stroke-dasharray="0.3 2.1" stroke-width="1.5"/><path d="M10.4 1.8 H13.2 M10.4 14.2 H13.2" stroke-width="1.2"/></g></svg>
<svg style="left:238px;top:431px" width="17" height="16" viewBox="0 0 17 16"><g fill="none" stroke="#e2e2e4" stroke-width="1.7" stroke-linecap="round" stroke-linejoin="round"><path d="M1.8 3.8 H15.2 M8.5 1.6 V3.6"/><path d="M3.7 4 V14 H13.3 V4"/></g></svg>
<svg style="left:279px;top:431px" width="16" height="16" viewBox="0 0 16 16"><g fill="none" stroke="#e2e2e4" stroke-width="1.7" stroke-linecap="round" stroke-linejoin="round"><path d="M2.8 2.8 H12.6 V9.4 L7.7 13.8 L2.8 9.4 Z"/></g></svg>
<svg style="left:317px;top:431px" width="18" height="16" viewBox="0 0 18 16"><g fill="none" stroke="#e2e2e4" stroke-width="1.7" stroke-linecap="round" stroke-linejoin="round"><rect x="4.9" y="2.7" width="8.2" height="10.8" rx="0.6"/><path d="M1.6 2.6 V13.6 M16.4 2.6 V13.6"/></g></svg>
<svg style="left:358px;top:431px" width="16" height="16" viewBox="0 0 16 16"><g fill="none" stroke="#e2e2e4" stroke-width="1.6" stroke-linecap="round" stroke-linejoin="round"><path d="M13.4 4.4 A6.3 6.3 0 1 0 14.2 9.4"/><path d="M6.6 5.6 L10.4 8 L6.6 10.4 Z"/></g></svg>
<svg style="left:0;top:0" width="520" height="460" viewBox="0 0 520 460"><g fill="none" stroke="#e2e2e4" stroke-width="1.5" stroke-linecap="round" stroke-linejoin="round"><path d="M405.2 432.8 V445 H399 Z"/><path d="M408.4 432.8 V445 H413.4 Z"/><path d="M439.6 437 L444.7 432 L453.4 437.2 M439.2 441.4 L448.3 446.6 L452.2 440.6"/><path d="M482.6 431.6 V444.4 H494 M479.2 434.6 H491.4 V447" stroke-width="1.7"/><path d="M484.6 442.6 L490 436.6" stroke-width="1"/></g><path d="M438.2 437.6 L441 435 L441.6 438.4 Z M453.4 439.6 L450.4 442.4 L450.2 439 Z" fill="#e2e2e4"/></svg>
<svg style="left:874px;top:430px" width="16" height="18" viewBox="0 0 16 18"><g fill="none" stroke="#d8d8da" stroke-width="1.2" stroke-linecap="round" stroke-linejoin="round"><rect x="4.4" y="1.4" width="6.2" height="10" rx="3"/><path d="M2 8.6 Q2 14 7.5 14 Q13 14 13 8.6 M7.5 14 V16.6 M4.6 16.8 H10.4"/><path d="M7.5 3.4 V8"/></g></svg>
<div class="a" style="left:909px;top:431px;width:1px;height:16px;background:#303034"></div>
<div class="a" style="left:926.4px;top:427.3px;width:23.8px;height:23.6px;border-radius:4px;background:#1c1c1f"></div>
<div class="a" style="left:966.6px;top:427.3px;width:23.8px;height:23.6px;border-radius:4px;background:#1c1c1f"></div>
<div class="a" style="left:1046.6px;top:427.3px;width:23.8px;height:23.6px;border-radius:4px;background:#1c1c1f"></div>
<svg style="left:929px;top:434px" width="20" height="10" viewBox="0 0 20 10"><rect x="0.4" y="2" width="4.6" height="6" fill="#10c4d2"/><path d="M8.4 3 V7 L5.8 5 Z" fill="#10c4d2"/><path d="M8 5 H10.6" stroke="#10c4d2" stroke-width="1.2"/><rect x="10.6" y="2.6" width="7.6" height="4.8" fill="none" stroke="#10c4d2" stroke-width="1.4"/></svg>
<svg style="left:968px;top:430px" width="20" height="18" viewBox="0 0 20 18"><rect x="1.4" y="6.6" width="17.2" height="5.4" fill="#10c4d2"/><rect x="9.3" y="7.4" width="1.4" height="3.8" fill="#1c1c1f"/><g stroke="#10c4d2" stroke-width="1.2" stroke-linecap="round"><path d="M10 1.6 V3.8 M5.6 3 L6.6 4.4 M14.4 3 L13.4 4.4 M10 16.4 V14.6 M5.6 15.2 L6.6 13.8 M14.4 15.2 L13.4 13.8"/></g></svg>
<svg style="left:1008px;top:433px" width="20" height="12" viewBox="0 0 20 12"><g fill="none" stroke="#dcdcde" stroke-width="1.7" stroke-linecap="round" stroke-linejoin="round"><path d="M8.4 2.6 H3.4 Q1.4 2.6 1.4 4.6 V7.4 Q1.4 9.4 3.4 9.4 H8.4 M11.6 2.6 H16.6 Q18.6 2.6 18.6 4.6 V7.4 Q18.6 9.4 16.6 9.4 H11.6 M5.4 6 H14.6"/></g></svg>
<svg style="left:1048px;top:431px" width="20" height="16" viewBox="0 0 20 16"><rect x="1.4" y="5" width="6.6" height="6.2" fill="#10c4d2"/><rect x="12" y="5" width="6.6" height="6.2" fill="#10c4d2"/><path d="M10 1 V15" stroke="#10c4d2" stroke-width="1.3"/></svg>
<div class="a" style="left:1078px;top:431px;width:1px;height:16px;background:#303034"></div>
<svg style="left:1089px;top:432px" width="20" height="16" viewBox="0 0 20 16"><g fill="none" stroke="#d8d8da" stroke-width="1.3" stroke-linecap="round" stroke-linejoin="round"><path d="M9 9.6 H1.6 V1.6 H17.6 V6"/><path d="M4.6 1.8 V4 M7.6 1.8 V4.8 M10.6 1.8 V4 M13.6 1.8 V4.8" stroke-width="1"/><circle cx="13.4" cy="9.8" r="3.4"/><path d="M15.8 12.4 L17.6 14.4"/></g></svg>
<svg style="left:1119.5px;top:431.5px" width="16" height="16" viewBox="0 0 16 16"><g fill="none" stroke="#e6e6e8" stroke-width="1.3" stroke-linecap="round" stroke-linejoin="round"><circle cx="8" cy="8" r="6.2"/><path d="M5.4 8 H10.6"/><path d="M12.4 12.6 L13.6 14"/></g></svg>
<svg style="left:1247.5px;top:431.5px" width="16" height="16" viewBox="0 0 16 16"><g fill="none" stroke="#e6e6e8" stroke-width="1.3" stroke-linecap="round" stroke-linejoin="round"><circle cx="8" cy="8" r="6.2"/><path d="M5.4 8 H10.6 M8 5.4 V10.6"/><path d="M12.4 12.6 L13.6 14"/></g></svg>
<div class="a" style="left:1144px;top:438.4px;width:96px;height:1.6px;background:#36363a"></div>
<div class="a" style="left:1143.6px;top:438.2px;width:12px;height:2px;background:#f0f0f0"></div>
<div class="a" style="left:1152.8px;top:433.4px;width:7.8px;height:12px;border-radius:3px 3px 4px 4px;background:#f6f6f6"></div>
<svg style="left:0;top:0" width="1271" height="681" viewBox="0 0 1271 681"><path d="M183.10 460.5 V470.5" stroke="#77777b" stroke-width="1.2"/><path d="M196.33 460.2 V465.6" stroke="#37373a" stroke-width="1"/><path d="M209.56 460.2 V465.6" stroke="#37373a" stroke-width="1"/><path d="M222.78 460.2 V465.6" stroke="#37373a" stroke-width="1"/><path d="M236.01 460.2 V465.6" stroke="#37373a" stroke-width="1"/><path d="M249.24 460.2 V465.6" stroke="#37373a" stroke-width="1"/><path d="M262.47 460.2 V465.6" stroke="#37373a" stroke-width="1"/><path d="M275.70 460.2 V465.6" stroke="#37373a" stroke-width="1"/><path d="M288.92 460.2 V465.6" stroke="#37373a" stroke-width="1"/><path d="M302.15 460.2 V465.6" stroke="#37373a" stroke-width="1"/><path d="M315.38 460.5 V470.5" stroke="#77777b" stroke-width="1.2"/><path d="M328.61 460.2 V465.6" stroke="#37373a" stroke-width="1"/><path d="M341.84 460.2 V465.6" stroke="#37373a" stroke-width="1"/><path d="M355.06 460.2 V465.6" stroke="#37373a" stroke-width="1"/><path d="M368.29 460.2 V465.6" stroke="#37373a" stroke-width="1"/><path d="M381.52 460.2 V465.6" stroke="#37373a" stroke-width="1"/><path d="M394.75 460.2 V465.6" stroke="#37373a" stroke-width="1"/><path d="M407.98 460.2 V465.6" stroke="#37373a" stroke-width="1"/><path d="M421.20 460.2 V465.6" stroke="#37373a" stroke-width="1"/><path d="M434.43 460.2 V465.6" stroke="#37373a" stroke-width="1"/><path d="M447.66 460.5 V470.5" stroke="#77777b" stroke-width="1.2"/><path d="M460.89 460.2 V465.6" stroke="#37373a" stroke-width="1"/><path d="M474.12 460.2 V465.6" stroke="#37373a" stroke-width="1"/><path d="M487.34 460.2 V465.6" stroke="#37373a" stroke-width="1"/><path d="M500.57 460.2 V465.6" stroke="#37373a" stroke-width="1"/><path d="M513.80 460.2 V465.6" stroke="#37373a" stroke-width="1"/><path d="M527.03 460.2 V465.6" stroke="#37373a" stroke-width="1"/><path d="M540.26 460.2 V465.6" stroke="#37373a" stroke-width="1"/><path d="M553.48 460.2 V465.6" stroke="#37373a" stroke-width="1"/><path d="M566.71 460.2 V465.6" stroke="#37373a" stroke-width="1"/><path d="M579.94 460.5 V470.5" stroke="#77777b" stroke-width="1.2"/><path d="M593.17 460.2 V465.6" stroke="#37373a" stroke-width="1"/><path d="M606.40 460.2 V465.6" stroke="#37373a" stroke-width="1"/><path d="M619.62 460.2 V465.6" stroke="#37373a" stroke-width="1"/><path d="M632.85 460.2 V465.6" stroke="#37373a" stroke-width="1"/><path d="M646.08 460.2 V465.6" stroke="#37373a" stroke-width="1"/><path d="M659.31 460.2 V465.6" stroke="#37373a" stroke-width="1"/><path d="M672.54 460.2 V465.6" stroke="#37373a" stroke-width="1"/><path d="M685.76 460.2 V465.6" stroke="#37373a" stroke-width="1"/><path d="M698.99 460.2 V465.6" stroke="#37373a" stroke-width="1"/><path d="M712.22 460.5 V470.5" stroke="#77777b" stroke-width="1.2"/><path d="M725.45 460.2 V465.6" stroke="#37373a" stroke-width="1"/><path d="M738.68 460.2 V465.6" stroke="#37373a" stroke-width="1"/><path d="M751.90 460.2 V465.6" stroke="#37373a" stroke-width="1"/><path d="M765.13 460.2 V465.6" stroke="#37373a" stroke-width="1"/><path d="M778.36 460.2 V465.6" stroke="#37373a" stroke-width="1"/><path d="M791.59 460.2 V465.6" stroke="#37373a" stroke-width="1"/><path d="M804.82 460.2 V465.6" stroke="#37373a" stroke-width="1"/><path d="M818.04 460.2 V465.6" stroke="#37373a" stroke-width="1"/><path d="M831.27 460.2 V465.6" stroke="#37373a" stroke-width="1"/><path d="M844.50 460.5 V470.5" stroke="#77777b" stroke-width="1.2"/><path d="M857.73 460.2 V465.6" stroke="#37373a" stroke-width="1"/><path d="M870.96 460.2 V465.6" stroke="#37373a" stroke-width="1"/><path d="M884.18 460.2 V465.6" stroke="#37373a" stroke-width="1"/><path d="M897.41 460.2 V465.6" stroke="#37373a" stroke-width="1"/><path d="M910.64 460.2 V465.6" stroke="#37373a" stroke-width="1"/><path d="M923.87 460.2 V465.6" stroke="#37373a" stroke-width="1"/><path d="M937.10 460.2 V465.6" stroke="#37373a" stroke-width="1"/><path d="M950.32 460.2 V465.6" stroke="#37373a" stroke-width="1"/><path d="M963.55 460.2 V465.6" stroke="#37373a" stroke-width="1"/><path d="M976.78 460.5 V470.5" stroke="#77777b" stroke-width="1.2"/><path d="M990.01 460.2 V465.6" stroke="#37373a" stroke-width="1"/><path d="M1003.24 460.2 V465.6" stroke="#37373a" stroke-width="1"/><path d="M1016.46 460.2 V465.6" stroke="#37373a" stroke-width="1"/><path d="M1029.69 460.2 V465.6" stroke="#37373a" stroke-width="1"/><path d="M1042.92 460.2 V465.6" stroke="#37373a" stroke-width="1"/><path d="M1056.15 460.2 V465.6" stroke="#37373a" stroke-width="1"/><path d="M1069.38 460.2 V465.6" stroke="#37373a" stroke-width="1"/><path d="M1082.60 460.2 V465.6" stroke="#37373a" stroke-width="1"/><path d="M1095.83 460.2 V465.6" stroke="#37373a" stroke-width="1"/><path d="M1109.06 460.5 V470.5" stroke="#77777b" stroke-width="1.2"/><path d="M1122.29 460.2 V465.6" stroke="#37373a" stroke-width="1"/><path d="M1135.52 460.2 V465.6" stroke="#37373a" stroke-width="1"/><path d="M1148.74 460.2 V465.6" stroke="#37373a" stroke-width="1"/><path d="M1161.97 460.2 V465.6" stroke="#37373a" stroke-width="1"/><path d="M1175.20 460.2 V465.6" stroke="#37373a" stroke-width="1"/><path d="M1188.43 460.2 V465.6" stroke="#37373a" stroke-width="1"/><path d="M1201.66 460.2 V465.6" stroke="#37373a" stroke-width="1"/><path d="M1214.88 460.2 V465.6" stroke="#37373a" stroke-width="1"/><path d="M1228.11 460.2 V465.6" stroke="#37373a" stroke-width="1"/><path d="M1241.34 460.5 V470.5" stroke="#77777b" stroke-width="1.2"/><path d="M1254.57 460.2 V465.6" stroke="#37373a" stroke-width="1"/></svg>
<div class="a" style="left:183px;top:457px;width:391px;height:1px;background:#3b3614"></div>
<span class="t" id="t45" style="left:187.7px;top:456.44px;font-size:12px;line-height:20px;color:#68686c;letter-spacing:-0.633px;">00:00</span>
<span class="t" id="t46" style="left:319.98px;top:456.44px;font-size:12px;line-height:20px;color:#68686c;letter-spacing:-0.633px;">00:10</span>
<span class="t" id="t47" style="left:452.26px;top:456.44px;font-size:12px;line-height:20px;color:#68686c;letter-spacing:-0.633px;">00:20</span>
<span class="t" id="t48" style="left:584.54px;top:456.44px;font-size:12px;line-height:20px;color:#68686c;letter-spacing:-0.633px;">00:30</span>
<span class="t" id="t49" style="left:716.82px;top:456.44px;font-size:12px;line-height:20px;color:#68686c;letter-spacing:-0.633px;">00:40</span>
<span class="t" id="t50" style="left:849.1px;top:456.44px;font-size:12px;line-height:20px;color:#68686c;letter-spacing:-0.633px;">00:50</span>
<span class="t" id="t51" style="left:981.38px;top:456.44px;font-size:12px;line-height:20px;color:#68686c;letter-spacing:-0.633px;">01:00</span>
<span class="t" id="t52" style="left:1113.66px;top:456.44px;font-size:12px;line-height:20px;color:#68686c;letter-spacing:-0.633px;">01:10</span>
<div class="a" style="left:1244.94px;top:455px;width:20.66px;height:20px;overflow:hidden"><span class="t" id="t53" style="left:1px;top:1.44px;font-size:12px;line-height:20px;color:#68686c;letter-spacing:-0.633px;">01:20</span></div>
<div class="a" style="left:9px;top:535px;width:1255px;height:75px;background:#222224"></div>
<div class="a" style="left:133px;top:484px;width:1px;height:187px;background:#262629"></div>
<svg style="left:16px;top:566.8px" width="14" height="12" viewBox="0 0 14 12"><g fill="none" stroke="#a8a8ac" stroke-width="1" stroke-linecap="round" stroke-linejoin="round"><rect x="1.2" y="1.6" width="11.6" height="9" rx="1"/><path d="M5.8 4.4 L8.6 6.1 L5.8 7.8 Z" fill="#a8a8ac" stroke-width="0.6"/></g></svg>
<svg style="left:41.5px;top:567.2px" width="12" height="12" viewBox="0 0 12 12"><g fill="none" stroke="#e0e0e2" stroke-width="1.3" stroke-linecap="round" stroke-linejoin="round"><rect x="1.8" y="5.2" width="8.4" height="5.6" rx="1"/><path d="M3.8 5 V3.6 Q3.8 1.4 6 1.4 Q8.2 1.4 8.2 3.6 V5"/></g></svg>
<svg style="left:64px;top:566.8px" width="14" height="12" viewBox="0 0 14 12"><g fill="none" stroke="#e0e0e2" stroke-width="1.2" stroke-linecap="round" stroke-linejoin="round"><path d="M1.4 6.2 Q4 2.4 7 2.4 Q10 2.4 12.6 6.2 Q10 10 7 10 Q4 10 1.4 6.2 Z"/><circle cx="7" cy="6.2" r="1.9" fill="#e0e0e2"/></g></svg>
<svg style="left:88px;top:566.8px" width="15" height="12" viewBox="0 0 15 12"><g fill="none" stroke="#e0e0e2" stroke-width="1.1" stroke-linecap="round" stroke-linejoin="round"><path d="M1.6 4.4 H3.8 L6.8 2 V10.4 L3.8 8 H1.6 Z"/><path d="M9 4.4 Q10.2 6.2 9 8 M11 3 Q13 6.2 11 9.4"/></g></svg>
<svg style="left:113px;top:570.8px" width="12" height="4" viewBox="0 0 12 4"><circle cx="2" cy="2" r="1" fill="#c8c8cc"/><circle cx="6" cy="2" r="1" fill="#c8c8cc"/><circle cx="10" cy="2" r="1" fill="#c8c8cc"/></svg>
<div class="a" style="left:137px;top:554px;width:38.5px;height:38px;border-radius:4px;background:#2d2d30;border:1px dashed #3c3c40"></div>
<svg style="left:150px;top:559px" width="13" height="13" viewBox="0 0 13 13"><g fill="none" stroke="#e0e0e2" stroke-width="1.1" stroke-linecap="round" stroke-linejoin="round"><path d="M2.4 8.6 L2.8 6.6 L8 1.6 Q8.6 1.1 9.2 1.6 L10 2.4 Q10.5 3 10 3.6 L4.8 8.8 Z"/><path d="M2 11.4 H10.6"/></g></svg>
<span class="t" id="t54" style="left:141px;top:570.24px;font-size:12px;line-height:20px;color:#d0d0d2;letter-spacing:-0.379px;">Cover</span>
<div class="a" style="left:135px;top:663px;width:1130px;height:6px;border-radius:3px;background:#323236"></div><svg style="left:141px;top:140px" width="86" height="86" viewBox="0 0 86 86"><defs><clipPath id="tc0"><rect x="0" y="0" width="86" height="86" rx="7.5"/></clipPath><linearGradient id="gr0" x1="0" y1="0" x2="0" y2="1"><stop offset="0" stop-color="#0c0c0c"/><stop offset="0.5" stop-color="#5a5a5a"/><stop offset="1" stop-color="#c4c4c4"/></linearGradient></defs><g clip-path="url(#tc0)"><rect width="86" height="86" fill="#d3d8e4"/><rect x="50" width="36" height="86" fill="#c9cfdc"/><g filter="url(#b05)"><path d="M10 86 Q14 64 32 58 L58 56 Q76 60 80 86 Z" fill="#eef0f6"/><path d="M14 65 Q44 59 78 65" fill="none" stroke="#5d6b8c" stroke-width="2.2" opacity="0.85"/><path d="M12 71 Q44 65 79 71" fill="none" stroke="#5d6b8c" stroke-width="2.2" opacity="0.85"/><path d="M10 77 Q44 71 81 77" fill="none" stroke="#5d6b8c" stroke-width="2.2" opacity="0.85"/><path d="M8 83 Q44 77 82 83" fill="none" stroke="#5d6b8c" stroke-width="2.2" opacity="0.85"/><path d="M23.6 30 Q21.6 2 45 0.8 Q66.4 1.4 66.4 28 Q67.4 40 62 50 L56 48 L30 51 Q24.6 42 23.6 30 Z" fill="#4a2f25"/><path d="M37 46 H53 V60 Q45 64 37 60 Z" fill="#e8b9a2"/><path d="M27.6 27 Q27 11 44.5 10.5 Q60.6 11 60.8 27 Q61 40 54.4 46.4 Q45 53.4 35 46.4 Q27.8 40 27.6 27 Z" fill="#f3d3c0"/><path d="M26.6 27 Q27 5.6 45 4.4 Q63.4 5.6 62.8 27 Q59 16 46 11 Q42 17 34 19.6 Q29 22 26.6 27 Z" fill="#4a2f25"/><path d="M40 8 Q50 5 58 12 Q50 9.5 40 8 Z" fill="#6b4534" opacity="0.7"/><ellipse cx="36.6" cy="26.2" rx="2.6" ry="1.5" fill="#33221c"/><ellipse cx="51.6" cy="26.2" rx="2.6" ry="1.5" fill="#33221c"/><path d="M33 22.4 Q36.6 20.8 40.4 22 M48 22 Q51.8 20.8 55.4 22.4" fill="none" stroke="#4a2f25" stroke-width="0.9" stroke-linecap="round" opacity="0.7"/><path d="M42.6 33.6 Q44.6 34.8 46.6 33.6" fill="none" stroke="#e8b9a2" stroke-width="1" stroke-linecap="round"/><path d="M36.6 38.4 Q44.6 40.8 52.6 38.4 Q51 44.6 44.6 44.8 Q38.4 44.6 36.6 38.4 Z" fill="#a84848"/><path d="M37.8 39 Q44.6 41 51.4 39 Q50.6 42 44.6 42.2 Q38.8 42 37.8 39 Z" fill="#fbf7f2"/><ellipse cx="35" cy="35" rx="3.4" ry="2.4" fill="#e8b9a2" opacity="0.55"/><ellipse cx="55" cy="35" rx="3.4" ry="2.4" fill="#e8b9a2" opacity="0.55"/><path d="M12 66 Q30 50 50 45 Q56 58 44 70 Q30 82 16 79 Z" fill="#b8d48a"/><path d="M12.6 66 Q30 51 49 46.4 Q53.6 58 42.6 68.6 Q30 79 17 76.8 Z" fill="#f4ecd8"/><path d="M12 66 Q30 50 48 47 Q51 58 41 67 Q30 76 18 75 Z" fill="#e86a66"/><path d="M20 66 Q32 56 44 52 Q44 60 36 66 Q28 71 22 70 Z" fill="#f29a92" opacity="0.7"/><path d="M46 70 Q52 60 60 58 Q64 60 62 66 Q58 74 50 78 Z" fill="#f3d3c0"/><path d="M14 78 Q20 74 28 78 Q30 84 26 86 H14 Z" fill="#f3d3c0"/></g><rect x="4.5" y="5" width="7.6" height="77" rx="3.8" fill="#d9dce4"/><path d="M4.5 12 V8.8 Q4.5 5 8.3 5 Q12.1 5 12.1 8.8 V12 Z" fill="#5a5a5c"/><rect x="4.5" y="12" width="7.6" height="8.5" fill="#b7b7b9"/><rect x="4.5" y="30" width="7.6" height="8.7" fill="#f0e63c"/><rect x="4.5" y="38.6" width="7.6" height="8.7" fill="#5ee9ee"/><rect x="4.5" y="47.2" width="7.6" height="8.7" fill="#62ea3c"/><rect x="4.5" y="55.8" width="7.6" height="8.7" fill="#e44df0"/><rect x="4.5" y="64.4" width="7.6" height="8.7" fill="#f0521f"/><path d="M4.5 73 H12.1 V78.2 Q12.1 82 8.3 82 Q4.5 82 4.5 78.2 Z" fill="#636365"/><path d="M67 9 Q67 5 71 5 L74 5 V76 H67 Z" fill="url(#gr0)"/><rect x="74" y="5" width="7.5" height="7.3" fill="#eceef2"/><rect x="74" y="12.2" width="7.5" height="7.3" fill="#dcdee2"/><rect x="74" y="19.4" width="7.5" height="7.3" fill="#cfd1d5"/><rect x="74" y="26.6" width="7.5" height="7.3" fill="#bdbfc3"/><rect x="74" y="33.8" width="7.5" height="7.3" fill="#a9abaf"/><rect x="74" y="41" width="7.5" height="7.3" fill="#939598"/><rect x="74" y="48.2" width="7.5" height="7.3" fill="#7d7f82"/><rect x="74" y="55.4" width="7.5" height="7.3" fill="#66686b"/><rect x="74" y="62.6" width="7.5" height="7.3" fill="#505254"/><rect x="74" y="69.8" width="7.5" height="7.3" fill="#3a3b3d"/><circle cx="72.8" cy="72.6" r="8" fill="#1d1d1f" opacity="0.92"/><path d="M72.8 67.6 V74.6 M69.8 71.8 L72.8 74.8 L75.8 71.8 M69 77.2 H76.6" fill="none" stroke="#fff" stroke-width="1.3" stroke-linecap="round" stroke-linejoin="round"/></g><rect x="0.5" y="0.5" width="85" height="85" rx="7.2" fill="none" stroke="#cfd2da" stroke-width="1" opacity="0.9"/></svg>
<svg style="left:243px;top:140px" width="86" height="86" viewBox="0 0 86 86"><defs><clipPath id="tc1"><rect x="0" y="0" width="86" height="86" rx="7.5"/></clipPath><linearGradient id="gr1" x1="0" y1="0" x2="0" y2="1"><stop offset="0" stop-color="#0c0c0c"/><stop offset="0.5" stop-color="#5a5a5a"/><stop offset="1" stop-color="#c4c4c4"/></linearGradient></defs><g clip-path="url(#tc1)"><rect width="86" height="86" fill="#e0dfdb"/><rect x="50" width="36" height="86" fill="#d9d6d0"/><g filter="url(#b05)"><path d="M10 86 Q14 64 32 58 L58 56 Q76 60 80 86 Z" fill="#efede9"/><path d="M14 65 Q44 59 78 65" fill="none" stroke="#7f7f8a" stroke-width="2.2" opacity="0.85"/><path d="M12 71 Q44 65 79 71" fill="none" stroke="#7f7f8a" stroke-width="2.2" opacity="0.85"/><path d="M10 77 Q44 71 81 77" fill="none" stroke="#7f7f8a" stroke-width="2.2" opacity="0.85"/><path d="M8 83 Q44 77 82 83" fill="none" stroke="#7f7f8a" stroke-width="2.2" opacity="0.85"/><path d="M23.6 30 Q21.6 2 45 0.8 Q66.4 1.4 66.4 28 Q67.4 40 62 50 L56 48 L30 51 Q24.6 42 23.6 30 Z" fill="#54382a"/><path d="M37 46 H53 V60 Q45 64 37 60 Z" fill="#e8c4aa"/><path d="M27.6 27 Q27 11 44.5 10.5 Q60.6 11 60.8 27 Q61 40 54.4 46.4 Q45 53.4 35 46.4 Q27.8 40 27.6 27 Z" fill="#f4dcc8"/><path d="M26.6 27 Q27 5.6 45 4.4 Q63.4 5.6 62.8 27 Q59 16 46 11 Q42 17 34 19.6 Q29 22 26.6 27 Z" fill="#54382a"/><path d="M40 8 Q50 5 58 12 Q50 9.5 40 8 Z" fill="#7a5540" opacity="0.7"/><ellipse cx="36.6" cy="26.2" rx="2.6" ry="1.5" fill="#33221c"/><ellipse cx="51.6" cy="26.2" rx="2.6" ry="1.5" fill="#33221c"/><path d="M33 22.4 Q36.6 20.8 40.4 22 M48 22 Q51.8 20.8 55.4 22.4" fill="none" stroke="#54382a" stroke-width="0.9" stroke-linecap="round" opacity="0.7"/><path d="M42.6 33.6 Q44.6 34.8 46.6 33.6" fill="none" stroke="#e8c4aa" stroke-width="1" stroke-linecap="round"/><path d="M36.6 38.4 Q44.6 40.8 52.6 38.4 Q51 44.6 44.6 44.8 Q38.4 44.6 36.6 38.4 Z" fill="#9a6a5a"/><path d="M37.8 39 Q44.6 41 51.4 39 Q50.6 42 44.6 42.2 Q38.8 42 37.8 39 Z" fill="#fbf7f2"/><ellipse cx="35" cy="35" rx="3.4" ry="2.4" fill="#e8c4aa" opacity="0.55"/><ellipse cx="55" cy="35" rx="3.4" ry="2.4" fill="#e8c4aa" opacity="0.55"/><path d="M12 66 Q30 50 50 45 Q56 58 44 70 Q30 82 16 79 Z" fill="#cfc7a2"/><path d="M12.6 66 Q30 51 49 46.4 Q53.6 58 42.6 68.6 Q30 79 17 76.8 Z" fill="#f0e8da"/><path d="M12 66 Q30 50 48 47 Q51 58 41 67 Q30 76 18 75 Z" fill="#dcb79c"/><path d="M20 66 Q32 56 44 52 Q44 60 36 66 Q28 71 22 70 Z" fill="#e9cdb6" opacity="0.7"/><path d="M46 70 Q52 60 60 58 Q64 60 62 66 Q58 74 50 78 Z" fill="#f4dcc8"/><path d="M14 78 Q20 74 28 78 Q30 84 26 86 H14 Z" fill="#f4dcc8"/></g><rect x="4.5" y="5" width="7.6" height="77" rx="3.8" fill="#e2e0dc"/><path d="M4.5 12 V8.8 Q4.5 5 8.3 5 Q12.1 5 12.1 8.8 V12 Z" fill="#5a5a5c"/><rect x="4.5" y="12" width="7.6" height="8.5" fill="#b7b7b9"/><rect x="4.5" y="30" width="7.6" height="8.7" fill="#d2ba85"/><rect x="4.5" y="38.6" width="7.6" height="8.7" fill="#7bbfe0"/><rect x="4.5" y="47.2" width="7.6" height="8.7" fill="#6fe68a"/><rect x="4.5" y="55.8" width="7.6" height="8.7" fill="#b58fd0"/><rect x="4.5" y="64.4" width="7.6" height="8.7" fill="#e0914c"/><path d="M4.5 73 H12.1 V78.2 Q12.1 82 8.3 82 Q4.5 82 4.5 78.2 Z" fill="#636365"/><path d="M67 9 Q67 5 71 5 L74 5 V76 H67 Z" fill="url(#gr1)"/><rect x="74" y="5" width="7.5" height="7.3" fill="#eceef2"/><rect x="74" y="12.2" width="7.5" height="7.3" fill="#dcdee2"/><rect x="74" y="19.4" width="7.5" height="7.3" fill="#cfd1d5"/><rect x="74" y="26.6" width="7.5" height="7.3" fill="#bdbfc3"/><rect x="74" y="33.8" width="7.5" height="7.3" fill="#a9abaf"/><rect x="74" y="41" width="7.5" height="7.3" fill="#939598"/><rect x="74" y="48.2" width="7.5" height="7.3" fill="#7d7f82"/><rect x="74" y="55.4" width="7.5" height="7.3" fill="#66686b"/><rect x="74" y="62.6" width="7.5" height="7.3" fill="#505254"/><rect x="74" y="69.8" width="7.5" height="7.3" fill="#3a3b3d"/><circle cx="72.8" cy="72.6" r="8" fill="#1d1d1f" opacity="0.92"/><path d="M72.8 67.6 V74.6 M69.8 71.8 L72.8 74.8 L75.8 71.8 M69 77.2 H76.6" fill="none" stroke="#fff" stroke-width="1.3" stroke-linecap="round" stroke-linejoin="round"/></g><rect x="0.5" y="0.5" width="85" height="85" rx="7.2" fill="none" stroke="#d6d4cf" stroke-width="1" opacity="0.9"/></svg><div class="a" style="left:180px;top:536px;width:394px;height:72.4px;border-radius:4px;background:#f6f6f6"></div>
<div class="a" style="left:183.4px;top:537.4px;width:387.4px;height:69.8px;background:#004f57;overflow:hidden"><div class="a" style="left:0;top:0;width:388px;height:17.6px;background:#0f5d65"></div><span class="t" id="t55" style="left:5.6px;top:0.04px;font-size:12px;line-height:20px;color:#f2f2f2;letter-spacing:-0.086px;">SLOW MOTION: Girl running in shallow water at sunset. A girl in a white</span><span class="t" id="t56" style="left:386px;top:0.04px;font-size:12px;line-height:20px;color:#f2f2f2;letter-spacing:-0.836px;">dress</span></div>
<div class="a" style="left:184px;top:555px;width:50px;height:37.6px;overflow:hidden"><svg style="left:0;top:0" width="50" height="37.6" viewBox="45.5 0 271 203" preserveAspectRatio="none"><use href="#beach" x="0" y="0" width="362" height="203"/><g transform="translate(4 0)"><path d="M207 152 L214 152 L214 196 L204 196 Z" fill="#5a4030" opacity="0.45"/><path d="M211 118 L208 153 L215 153 L219 118 Z M223 116 L243 150 L249 162 L255 158 L235 116 Z" fill="#7a5240"/><path d="M214 84 L222 82 Q236 104 240 120 Q226 124 210 121 Z" fill="#4f86d8"/><path d="M212 64 Q222 57 230 66 Q234 80 230 94 Q222 86 218 78 Q211 72 212 64 Z" fill="#2a1e1a"/></g></svg></div><div class="a" style="left:234px;top:555px;width:50px;height:37.6px;overflow:hidden"><svg style="left:0;top:0" width="50" height="37.6" viewBox="45.5 0 271 203" preserveAspectRatio="none"><use href="#beach" x="0" y="0" width="362" height="203"/><g transform="translate(4 0)"><path d="M207 152 L214 152 L214 196 L204 196 Z" fill="#5a4030" opacity="0.45"/><path d="M211 118 L208 153 L215 153 L219 118 Z M223 116 L243 150 L249 162 L255 158 L235 116 Z" fill="#7a5240"/><path d="M214 84 L222 82 Q236 104 240 120 Q226 124 210 121 Z" fill="#4f86d8"/><path d="M212 64 Q222 57 230 66 Q234 80 230 94 Q222 86 218 78 Q211 72 212 64 Z" fill="#2a1e1a"/></g></svg></div><div class="a" style="left:284px;top:555px;width:50px;height:37.6px;overflow:hidden"><svg style="left:0;top:0" width="50" height="37.6" viewBox="45.5 0 271 203" preserveAspectRatio="none"><use href="#beach" x="0" y="0" width="362" height="203"/><g transform="translate(4 0)"><path d="M207 152 L214 152 L214 196 L204 196 Z" fill="#5a4030" opacity="0.45"/><path d="M211 118 L208 153 L215 153 L219 118 Z M223 116 L243 150 L249 162 L255 158 L235 116 Z" fill="#7a5240"/><path d="M214 84 L222 82 Q236 104 240 120 Q226 124 210 121 Z" fill="#4f86d8"/><path d="M212 64 Q222 57 230 66 Q234 80 230 94 Q222 86 218 78 Q211 72 212 64 Z" fill="#2a1e1a"/></g></svg></div><div class="a" style="left:334px;top:555px;width:50px;height:37.6px;overflow:hidden"><svg style="left:0;top:0" width="50" height="37.6" viewBox="45.5 0 271 203" preserveAspectRatio="none"><use href="#beach" x="0" y="0" width="362" height="203"/><g transform="translate(2 0)"><path d="M207 152 L214 152 L214 196 L204 196 Z" fill="#5a4030" opacity="0.45"/><path d="M211 118 L208 153 L215 153 L219 118 Z M223 116 L243 150 L249 162 L255 158 L235 116 Z" fill="#7a5240"/><path d="M214 84 L222 82 Q236 104 240 120 Q226 124 210 121 Z" fill="#4f86d8"/><path d="M214 88 L196 50 L200 48 L220 84 Z M222 84 L244 52 L248 55 L226 90 Z" fill="#6a4636"/><path d="M212 64 Q222 57 230 66 Q234 80 230 94 Q222 86 218 78 Q211 72 212 64 Z" fill="#2a1e1a"/></g></svg></div><div class="a" style="left:384px;top:555px;width:50px;height:37.6px;overflow:hidden"><svg style="left:0;top:0" width="50" height="37.6" viewBox="45.5 0 271 203" preserveAspectRatio="none"><use href="#beach" x="0" y="0" width="362" height="203"/><g transform="translate(0 0)"><path d="M207 152 L214 152 L214 196 L204 196 Z" fill="#5a4030" opacity="0.45"/><path d="M211 118 L208 153 L215 153 L219 118 Z M223 116 L243 150 L249 162 L255 158 L235 116 Z" fill="#7a5240"/><path d="M214 84 L222 82 Q236 104 240 120 Q226 124 210 121 Z" fill="#4f86d8"/><path d="M214 88 L196 50 L200 48 L220 84 Z M222 84 L244 52 L248 55 L226 90 Z" fill="#6a4636"/><path d="M212 64 Q222 57 230 66 Q234 80 230 94 Q222 86 218 78 Q211 72 212 64 Z" fill="#2a1e1a"/></g></svg></div><div class="a" style="left:434px;top:555px;width:50px;height:37.6px;overflow:hidden"><svg style="left:0;top:0" width="50" height="37.6" viewBox="45.5 0 271 203" preserveAspectRatio="none"><use href="#beach" x="0" y="0" width="362" height="203"/><path d="M40 96 L330 100 V150 Q250 140 150 136 Q90 130 40 112 Z" fill="#c9cdbb" opacity="0.75" filter="url(#b4)"/><g transform="translate(14 0)"><path d="M207 152 L214 152 L214 196 L204 196 Z" fill="#5a4030" opacity="0.45"/><path d="M211 118 L208 153 L215 153 L219 118 Z M223 116 L243 150 L249 162 L255 158 L235 116 Z" fill="#7a5240"/><path d="M214 84 L222 82 Q236 104 240 120 Q226 124 210 121 Z" fill="#4f86d8"/><path d="M186 82 L218 88 L252 84 L252 89 L218 96 L186 88 Z" fill="#6a4636"/><path d="M212 64 Q222 57 230 66 Q234 80 230 94 Q222 86 218 78 Q211 72 212 64 Z" fill="#2a1e1a"/></g></svg></div><div class="a" style="left:484px;top:555px;width:50px;height:37.6px;overflow:hidden"><svg style="left:0;top:0" width="50" height="37.6" viewBox="45.5 0 271 203" preserveAspectRatio="none"><use href="#beach" x="0" y="0" width="362" height="203"/><path d="M40 96 L330 100 V150 Q250 140 150 136 Q90 130 40 112 Z" fill="#c9cdbb" opacity="0.75" filter="url(#b4)"/><g transform="translate(14 0)"><path d="M207 152 L214 152 L214 196 L204 196 Z" fill="#5a4030" opacity="0.45"/><path d="M211 118 L208 153 L215 153 L219 118 Z M223 116 L243 150 L249 162 L255 158 L235 116 Z" fill="#7a5240"/><path d="M214 84 L222 82 Q236 104 240 120 Q226 124 210 121 Z" fill="#4f86d8"/><path d="M186 82 L218 88 L252 84 L252 89 L218 96 L186 88 Z" fill="#6a4636"/><path d="M212 64 Q222 57 230 66 Q234 80 230 94 Q222 86 218 78 Q211 72 212 64 Z" fill="#2a1e1a"/></g></svg></div><div class="a" style="left:534px;top:555px;width:36.4px;height:37.6px;overflow:hidden"><svg style="left:0;top:0" width="50" height="37.6" viewBox="88 0 271 203" preserveAspectRatio="none"><use href="#beach" x="0" y="0" width="362" height="203"/><path d="M40 96 L330 100 V150 Q250 140 150 136 Q90 130 40 112 Z" fill="#c9cdbb" opacity="0.75" filter="url(#b4)"/><g transform="translate(64 0)"><path d="M207 152 L214 152 L214 196 L204 196 Z" fill="#5a4030" opacity="0.45"/><path d="M211 118 L208 153 L215 153 L219 118 Z M223 116 L243 150 L249 162 L255 158 L235 116 Z" fill="#7a5240"/><path d="M214 84 L222 82 Q236 104 240 120 Q226 124 210 121 Z" fill="#4f86d8"/><path d="M212 64 Q222 57 230 66 Q234 80 230 94 Q222 86 218 78 Q211 72 212 64 Z" fill="#2a1e1a"/></g></svg></div>
<div class="a" style="left:182.4px;top:469px;width:1.5px;height:188px;background:#f2f2f2"></div>
<svg style="left:177px;top:455px" width="12" height="17" viewBox="0 0 12 17"><path d="M1.7 3 Q1.7 1.6 3.1 1.6 H9.1 Q10.5 1.6 10.5 3 V10.6 Q10.5 12 9.4 13 L6.1 15.6 L2.8 13 Q1.7 12 1.7 10.6 Z" fill="#1a1a1c" stroke="#fafafa" stroke-width="1.5" stroke-linejoin="round"/></svg>
</body></html>
